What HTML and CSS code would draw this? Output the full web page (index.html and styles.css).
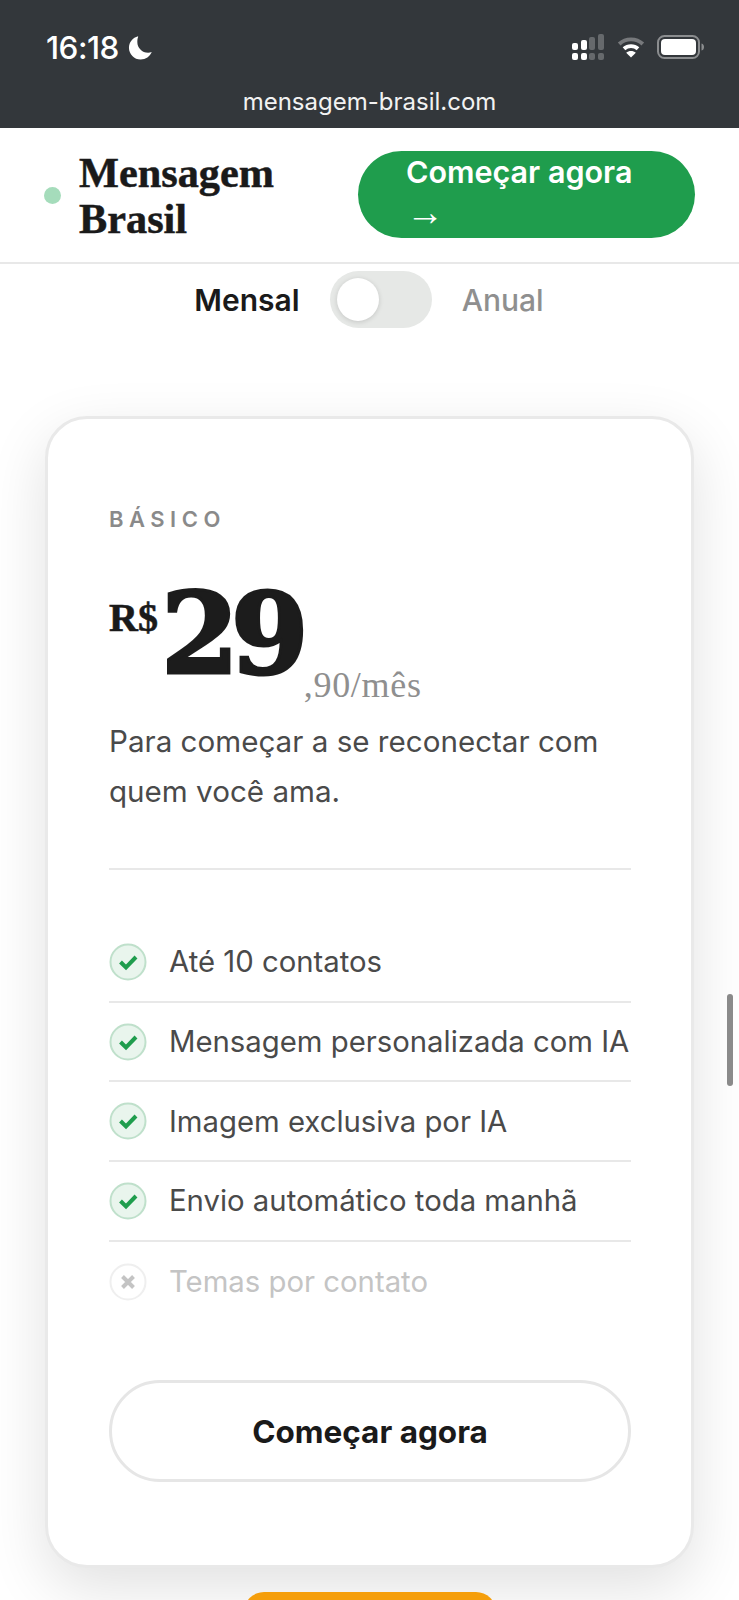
FILE: index.html
```html
<!DOCTYPE html>
<html lang="pt-BR">
<head>
  <meta charset="UTF-8" />
  <meta name="viewport" content="width=device-width, initial-scale=1.0" />
  <title>Mensagem Brasil</title>
  <link rel="stylesheet" href="styles.css">
</head>
<body>
  <!-- Phone chrome -->
  <div class="phone-bar">
    <div class="status-row">
      <div class="status-time">
        <span>16:18</span>
        <svg class="moon" viewBox="0 0 26 26" width="25" height="25"><path fill="#fff" d="M10.500 1.200C5 2.500 1 7.400 1 13.200 1 20 6.400 25.500 13.200 25.500c5.200 0 9.700-3.200 11.500-7.800-1.200.5-2.500.7-3.800.7-6.200 0-11.200-5-11.200-11.200 0-2 .3-3.800.8-5z"/></svg>
      </div>
      <div class="status-icons">
        <svg viewBox="0 0 34 28" width="34" height="28">
          <g fill="#fff">
            <rect x="1" y="10" width="6" height="7" rx="2"/><rect x="10" y="7" width="6" height="10" rx="2"/>
            <rect x="1" y="20" width="6" height="7" rx="2"/><rect x="10" y="20" width="6" height="7" rx="2"/>
          </g>
          <g fill="#66696c">
            <rect x="18" y="4" width="6" height="13" rx="2"/><rect x="27" y="1" width="6" height="16" rx="2"/>
            <rect x="18" y="20" width="6" height="7" rx="2"/><rect x="27" y="20" width="6" height="7" rx="2"/>
          </g>
        </svg>
        <svg viewBox="0 0 32 26" width="28" height="26">
          <path fill="none" stroke="#77797c" stroke-width="4.500" d="M2.500 9.500C10 2.500 22 2.500 29.500 9.500"/>
          <path fill="none" stroke="#fff" stroke-width="4.500" d="M8 15c4.500-4 11.500-4 16 0"/>
          <path fill="#fff" d="M16 25l-5.500-5.500c3-2.700 8-2.700 11 0z"/>
        </svg>
        <svg viewBox="0 0 48 24" width="48" height="24">
          <rect x="1" y="1" width="41" height="22" rx="6.500" fill="none" stroke="#8b8d8f" stroke-width="2"/>
          <rect x="4" y="4" width="35" height="16" rx="4" fill="#fff"/>
          <path d="M44.500 8.500c2 .5 2.500 2 2.500 3.500s-.5 3-2.500 3.500z" fill="#8b8d8f"/>
        </svg>
      </div>
    </div>
    <div class="url-row">mensagem-brasil.com</div>
  </div>

  <!-- Site header -->
  <header class="site-header">
    <div class="brand">
      <span class="brand-dot"></span>
      <span class="brand-name">Mensagem Brasil</span>
    </div>
    <a class="header-cta">Começar agora <span class="arrow">→</span></a>
  </header>

  <!-- Billing toggle -->
  <div class="billing">
    <span class="billing-label active">Mensal</span>
    <span class="switch"><span class="switch-knob"></span></span>
    <span class="billing-label">Anual</span>
  </div>

  <!-- Plan card -->
  <section class="plan-card">
    <div class="plan-name">BÁSICO</div>
    <div class="plan-price">
      <span class="currency">R$</span><span class="amount">29</span><span class="period">,90/mês</span>
    </div>
    <p class="plan-desc">Para começar a se reconectar com quem você ama.</p>
    <ul class="features">
      <li class="feature"><svg class="tick" viewBox="0 0 38 38"><circle cx="19" cy="19" r="17.500" fill="#e9f5ed" stroke="#bfe0cb" stroke-width="2"/><path d="M11.500 19l5.500 5.500 10-10.500" fill="none" stroke="#1f9d4d" stroke-width="4"/></svg>Até 10 contatos</li>
      <li class="feature"><svg class="tick" viewBox="0 0 38 38"><circle cx="19" cy="19" r="17.500" fill="#e9f5ed" stroke="#bfe0cb" stroke-width="2"/><path d="M11.500 19l5.500 5.500 10-10.500" fill="none" stroke="#1f9d4d" stroke-width="4"/></svg>Mensagem personalizada com IA</li>
      <li class="feature"><svg class="tick" viewBox="0 0 38 38"><circle cx="19" cy="19" r="17.500" fill="#e9f5ed" stroke="#bfe0cb" stroke-width="2"/><path d="M11.500 19l5.500 5.500 10-10.500" fill="none" stroke="#1f9d4d" stroke-width="4"/></svg>Imagem exclusiva por IA</li>
      <li class="feature"><svg class="tick" viewBox="0 0 38 38"><circle cx="19" cy="19" r="17.500" fill="#e9f5ed" stroke="#bfe0cb" stroke-width="2"/><path d="M11.500 19l5.500 5.500 10-10.500" fill="none" stroke="#1f9d4d" stroke-width="4"/></svg>Envio automático toda manhã</li>
      <li class="feature off"><svg class="tick" viewBox="0 0 38 38"><circle cx="19" cy="19" r="17.500" fill="#fff" stroke="#efefef" stroke-width="2"/><path d="M13.500 13.500l11 11M24.500 13.500l-11 11" fill="none" stroke="#c4c4c4" stroke-width="4"/></svg>Temas por contato</li>
    </ul>
    <a class="plan-cta">Começar agora</a>
  </section>

  <div class="next-badge"></div>
  <div class="scroll-thumb"></div>
</body>
</html>
```

FILE: styles.css
```css
/* Reset and Basic Styles */
* {
  margin: 0;
  padding: 0;
  box-sizing: border-box;
}
body {
  width: 739px;
  height: 1600px;
  overflow: hidden;
  position: relative;
  background: #fff;
  font-family: 'Inter', 'Liberation Sans', sans-serif;
  color: #1a1a1a;
}
/* Phone chrome */
.phone-bar {
  height: 128px;
  background: #33373b;
  color: #fff;
  padding: 27px 46px 0;
}
.status-row {
  display: flex;
  justify-content: space-between;
  align-items: center;
  height: 40px;
}
.status-time {
  display: flex;
  align-items: center;
  gap: 9px;
  font-size: 31.500px;
  font-weight: 500;
  letter-spacing: -0.5px;
}
.status-icons {
  display: flex;
  align-items: center;
  gap: 12px;
  margin-right: -12px;
}
.url-row {
  margin-top: 18px;
  text-align: center;
  font-size: 24px;
  line-height: 34px;
  color: #f2f2f2;
}
/* Site header */
.site-header {
  height: 136px;
  border-bottom: 2px solid #e8e8e8;
  padding: 0 44px;
  display: flex;
  justify-content: space-between;
  align-items: center;
}
.brand {
  display: flex;
  align-items: center;
  gap: 18px;
}
.brand-dot {
  width: 17px;
  height: 17px;
  border-radius: 50%;
  background: #a5dcbb;
}
.brand-name {
  width: 210px;
  padding-top: 2px;
  font-family: 'Liberation Serif', serif;
  font-weight: 700;
  font-size: 42.300px;
  line-height: 46px;
  color: #1a1a1a;
  -webkit-text-stroke: 0.5px #1a1a1a;
}
.header-cta {
  width: 337px;
  height: 87px;
  margin-top: -2px;
  padding: 0 48px;
  border-radius: 44px;
  background: #1f9d4d;
  color: #fff;
  font-size: 30.500px;
  font-weight: 600;
  line-height: 42px;
}
.arrow {
  font-family: 'Liberation Serif', serif;
  font-weight: 400;
  font-size: 38px;
  line-height: 30px;
}
/* Billing toggle */
.billing {
  height: 58px;
  margin-top: 6px;
  display: flex;
  justify-content: center;
  align-items: center;
  gap: 30px;
  padding-right: 1px;
}
.billing-label {
  padding-top: 1px;
  font-size: 30px;
  font-weight: 500;
  color: #8f8f8f;
}
.billing-label.active {
  font-weight: 600;
  color: #1a1a1a;
}
.switch {
  width: 102px;
  height: 57px;
  border-radius: 29px;
  background: #e6e8e6;
  padding: 7px;
  display: block;
}
.switch-knob {
  display: block;
  width: 42px;
  height: 43px;
  border-radius: 50%;
  background: #fff;
  box-shadow: 0 1px 5px rgba(0, 0, 0, 0.15);
}
/* Plan card */
.plan-card {
  width: 649px;
  height: 1152px;
  margin: 88px 0 0 45px;
  padding: 87px 60px 0 61px;
  background: #fff;
  border: 3px solid #e9e9e9;
  border-radius: 42px;
  box-shadow: 0 20px 60px rgba(0, 0, 0, 0.12);
}
.plan-name {
  font-size: 22px;
  font-weight: 600;
  line-height: 26px;
  letter-spacing: 5.500px;
  color: #8a8a8a;
}
.plan-price {
  height: 142px;
  margin-top: 30px;
  display: flex;
  align-items: flex-start;
  font-family: 'Liberation Serif', serif;
}
.currency {
  margin-top: 33px;
  font-size: 40px;
  font-weight: 700;
  line-height: 46px;
  -webkit-text-stroke: 0.6px #1c1c1c;
}
.amount {
  margin: 4px 0 0 3px;
  font-family: 'DejaVu Serif', serif;
  font-size: 112px;
  font-weight: 700;
  line-height: 136px;
  letter-spacing: -8px;
  -webkit-text-stroke: 3px #1c1c1c;
  color: #1c1c1c;
}
.period {
  margin: 103px 0 0 3px;
  font-size: 36px;
  line-height: 40px;
  letter-spacing: 0.700px;
  color: #8f8f8f;
}
.plan-desc {
  margin-top: 12px;
  font-size: 29.600px;
  line-height: 50px;
  color: #4a4a4a;
  padding-bottom: 52px;
  border-bottom: 2px solid #e8e8e8;
}
.features {
  list-style: none;
  margin-top: 53px;
}
.feature {
  display: flex;
  align-items: center;
  gap: 22px;
  height: 79.700px;
  font-size: 29.300px;
  color: #4a4a4a;
  border-bottom: 2px solid #e8e8e8;
  white-space: nowrap;
}
.feature.off {
  color: #c4c4c4;
  border-bottom: none;
}
.tick {
  width: 38px;
  height: 38px;
  flex: none;
}
.plan-cta {
  display: flex;
  justify-content: center;
  align-items: center;
  height: 102px;
  margin-top: 59px;
  border: 3px solid #e6e6e6;
  border-radius: 51px;
  font-size: 31.500px;
  font-weight: 700;
  color: #1a1a1a;
}
/* Overlays */
.next-badge {
  width: 252px;
  height: 40px;
  margin: 24px 0 0 244px;
  border-radius: 20px;
  background: #f59e0b;
}
.scroll-thumb {
  position: absolute;
  left: 727px;
  top: 994px;
  width: 6px;
  height: 92px;
  border-radius: 3px;
  background: #8a8a8a;
}
```
